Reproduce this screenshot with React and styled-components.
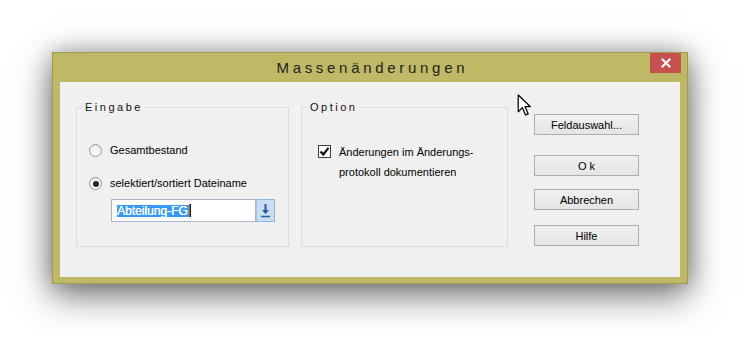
import React from "react";
import styled, { createGlobalStyle } from "styled-components";

const Global = createGlobalStyle`
  html, body { margin: 0; padding: 0; background: #ffffff; }
  body { font-family: "Liberation Sans", Arial, sans-serif; }
  * { box-sizing: border-box; }
`;

const Page = styled.div`
  padding: 52px 0 0 52px;
  width: 740px;
  height: 337px;
  overflow: hidden;
`;

const Window = styled.div`
  width: 636px;
  border: 1px solid #a29b4c;
  background: #bfb865;
  padding: 0 7px 6px 7px;
  box-shadow: 0 12px 34px rgba(0, 0, 0, 0.5), 0 0 22px rgba(0, 0, 0, 0.28);
`;

const TitleBar = styled.div`
  height: 29px;
  display: grid;
  grid-template-columns: 1fr auto 1fr;
  align-items: start;
  margin: 0 -1px 0 0;
`;

const Title = styled.div`
  grid-column: 2;
  align-self: center;
  font-size: 15px;
  letter-spacing: 3.7px;
  padding-left: 3.7px;
  color: #23231f;
  line-height: 29px;
`;

const CloseButton = styled.div`
  grid-column: 3;
  justify-self: end;
  width: 31px;
  height: 20px;
  background: #c75050;
  display: flex;
  align-items: center;
  justify-content: center;
`;

const Client = styled.div`
  position: relative;
  height: 195px;
  background: #f0f0f0;
  padding: 25px 0 0 16px;
  display: flex;
  align-items: flex-start;
  font-size: 11px;
  color: #000;
`;

const Group = styled.div`
  position: relative;
  width: ${(p) => p.$width}px;
  height: 140px;
  border: 1px solid #dcdcdc;
  margin-right: ${(p) => p.$gap}px;
  padding: ${(p) => p.$pad};
  display: flex;
  flex-direction: column;
`;

const GroupLabel = styled.span`
  position: absolute;
  top: -7px;
  left: 6px;
  padding: 0 2px;
  background: #f0f0f0;
  font-size: 11px;
  line-height: 12px;
  letter-spacing: 2.5px;
  color: #111;
`;

const RadioRow = styled.div`
  display: flex;
  align-items: center;
  height: 13px;
  margin-top: ${(p) => p.$mt || 0}px;
`;

const RadioCircle = styled.span`
  width: 13px;
  height: 13px;
  border-radius: 50%;
  border: 1px solid #939393;
  background: linear-gradient(#ececec, #ffffff);
  display: flex;
  align-items: center;
  justify-content: center;
  flex: none;
  &::after {
    content: "";
    width: 6px;
    height: 6px;
    border-radius: 50%;
    background: ${(p) => (p.$checked ? "#262626" : "transparent")};
  }
`;

const OptionText = styled.span`
  margin-left: 8px;
  font-size: 11px;
  line-height: 13px;
  white-space: nowrap;
`;

const InputRow = styled.div`
  display: flex;
  margin: 9px 0 0 22px;
  height: 23px;
`;

const TextField = styled.div`
  width: 145px;
  height: 23px;
  border: 1px solid #a9b6c9;
  background: #ffffff;
  padding: 4px 0 0 5px;
  display: flex;
  align-items: flex-start;
`;

const Selected = styled.span`
  display: inline-block;
  height: 12px;
  line-height: 12px;
  margin-top: 1px;
  background: #3399ff;
  color: #ffffff;
  font-size: 12px;
  padding: 0 1px 0 0;
  text-shadow: 0.3px 0 0 #ffffff;
`;

const Caret = styled.span`
  display: inline-block;
  width: 2px;
  height: 13px;
  background: linear-gradient(90deg, #c06a10 0 1px, #151515 1px);
`;

const DropButton = styled.div`
  width: 19px;
  height: 23px;
  border: 1px solid #8db3e2;
  border-left-color: #9fbfe6;
  background: #cbdcf3;
  display: flex;
  align-items: center;
  justify-content: center;
`;

const CheckRow = styled.div`
  display: flex;
  align-items: flex-start;
`;

const CheckBox = styled.span`
  width: 13px;
  height: 13px;
  margin-top: 3px;
  border: 1px solid #3c3c3c;
  background: #ffffff;
  display: flex;
  align-items: center;
  justify-content: center;
  flex: none;
`;

const CheckText = styled.div`
  margin-left: 8px;
  font-size: 11px;
  line-height: 20px;
`;

const ButtonColumn = styled.div`
  display: flex;
  flex-direction: column;
  padding-top: 7px;
`;

const Button = styled.div`
  width: 105px;
  height: 21px;
  margin-top: ${(p) => p.$mt || 0}px;
  border: 1px solid #adadad;
  background: linear-gradient(#f0f0f0, #e5e5e5);
  display: flex;
  align-items: center;
  justify-content: center;
  font-size: 11px;
  color: #000;
`;

const Cursor = styled.svg`
  position: absolute;
  left: 457px;
  top: 12px;
`;

function CloseIcon() {
  return (
    <svg width="10" height="10" viewBox="0 0 10 10">
      <path d="M1.5 1.5 L8.5 8.5 M8.5 1.5 L1.5 8.5" stroke="#fff" strokeWidth="2" strokeLinecap="square" />
    </svg>
  );
}

function DownArrow() {
  return (
    <svg width="11" height="15" viewBox="0 0 11 15">
      <path d="M5.5 1 V10" stroke="#1d5ea8" strokeWidth="2" />
      <path d="M2 7 L5.5 11 L9 7 Z" fill="#1d5ea8" />
      <path d="M1 13.5 H10" stroke="#1d5ea8" strokeWidth="1.5" />
    </svg>
  );
}

function CheckMark() {
  return (
    <svg width="11" height="11" viewBox="0 0 11 11">
      <path d="M1.5 5.5 L4.3 8.5 L9.5 1.8" fill="none" stroke="#111" strokeWidth="2.2" />
    </svg>
  );
}

export default function App() {
  return (
    <Page>
      <Global />
      <Window>
        <TitleBar>
          <Title>Massenänderungen</Title>
          <CloseButton>
            <CloseIcon />
          </CloseButton>
        </TitleBar>
        <Client>
          <Group $width={213} $gap={12} $pad="36px 0 0 12px">
            <GroupLabel>Eingabe</GroupLabel>
            <RadioRow>
              <RadioCircle />
              <OptionText>Gesamtbestand</OptionText>
            </RadioRow>
            <RadioRow $mt={20}>
              <RadioCircle $checked />
              <OptionText>selektiert/sortiert Dateiname</OptionText>
            </RadioRow>
            <InputRow>
              <TextField>
                <Selected>Abteilung-FG</Selected>
                <Caret />
              </TextField>
              <DropButton>
                <DownArrow />
              </DropButton>
            </InputRow>
          </Group>
          <Group $width={207} $gap={26} $pad="34px 0 0 16px">
            <GroupLabel>Option</GroupLabel>
            <CheckRow>
              <CheckBox>
                <CheckMark />
              </CheckBox>
              <CheckText>
                Änderungen im Änderungs-
                <br />
                protokoll dokumentieren
              </CheckText>
            </CheckRow>
          </Group>
          <ButtonColumn>
            <Button>Feldauswahl...</Button>
            <Button $mt={20}>O k</Button>
            <Button $mt={13}>Abbrechen</Button>
            <Button $mt={15}>Hilfe</Button>
          </ButtonColumn>
          <Cursor width="15" height="23" viewBox="0 0 14 22">
            <path d="M1 1 L1 17 L5 13 L8 20 L10.5 19 L7.5 12 L12.5 12 Z" fill="#fff" stroke="#000" strokeWidth="1.2" strokeLinejoin="round" />
          </Cursor>
        </Client>
      </Window>
    </Page>
  );
}
